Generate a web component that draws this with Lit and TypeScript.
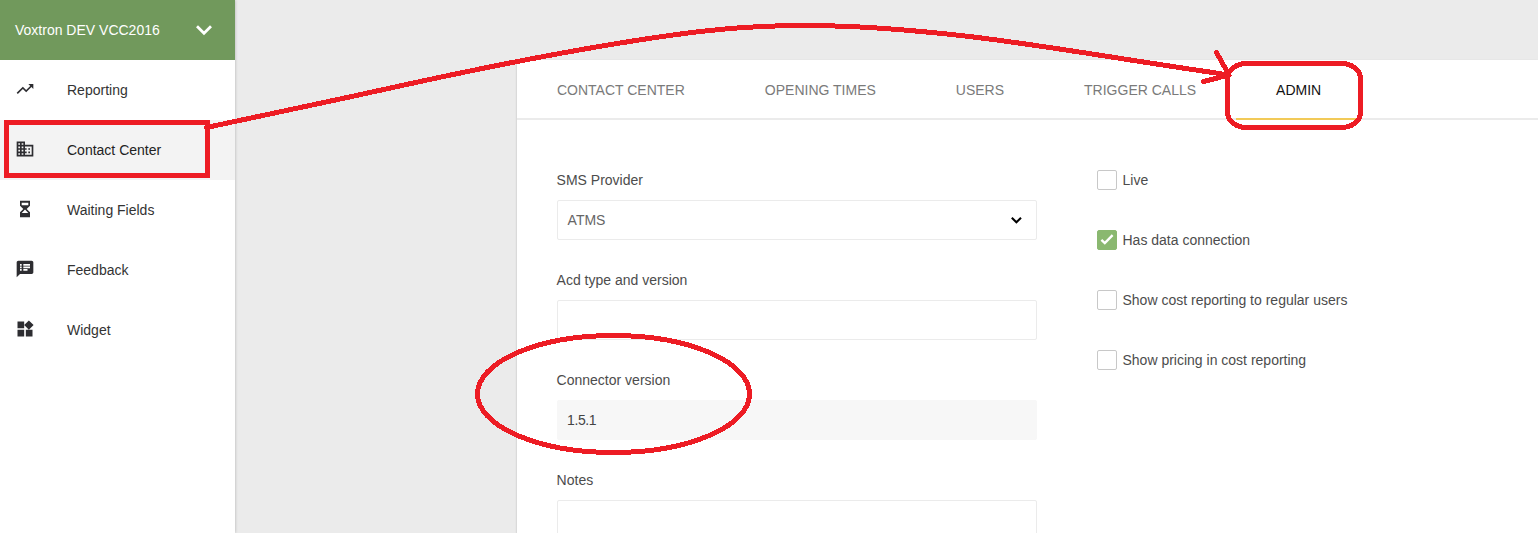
import { LitElement, html, css, svg } from "lit";
import { customElement, property } from "lit/decorators.js";
import { classMap } from "lit/directives/class-map.js";

const ICONS: Record<string, string> = {
  trending: "M16 6l2.29 2.29-4.88 4.88-4-4L2 16.59 3.41 18l6-6 4 4 6.3-6.29L22 12V6z",
  business:
    "M12 7V3H2v18h20V7H12zM6 19H4v-2h2v2zm0-4H4v-2h2v2zm0-4H4V9h2v2zm0-4H4V5h2v2zm4 12H8v-2h2v2zm0-4H8v-2h2v2zm0-4H8V9h2v2zm0-4H8V5h2v2zm10 12h-8v-2h2v-2h-2v-2h2v-2h-2V9h8v10zm-2-8h-2v2h2v-2zm0 4h-2v2h2v-2z",
  hourglass: "M6 2h12v6l-4 4 4 4v6H6v-6l4-4-4-4zM8 4.4v3h8v-3zM12 12.6l-4 4.2h8z",
  notes:
    "M20 2H4c-1.1 0-1.99.9-1.99 2L2 22l4-4h14c1.1 0 2-.9 2-2V4c0-1.1-.9-2-2-2zM8 14H6v-2h2v2zm0-3H6V9h2v2zm0-3H6V6h2v2zm7 6h-5v-2h5v2zm3-3h-8V9h8v2zm0-3h-8V6h8v2z",
  widgets: "M13 13v8h8v-8h-8zM3 21h8v-8H3v8zM3 3v8h8V3H3zm13.66-1.31L11 7.34 16.66 13l5.66-5.66-5.66-5.65z",
};

const NAV = [
  { label: "Reporting", icon: "trending" },
  { label: "Contact Center", icon: "business", active: true },
  { label: "Waiting Fields", icon: "hourglass" },
  { label: "Feedback", icon: "notes" },
  { label: "Widget", icon: "widgets" },
];

const TABS = ["Contact Center", "Opening Times", "Users", "Trigger Calls", "Admin"];

const OPTIONS = [
  { label: "Live", checked: false },
  { label: "Has data connection", checked: true },
  { label: "Show cost reporting to regular users", checked: false },
  { label: "Show pricing in cost reporting", checked: false },
];

@customElement("side-nav")
class SideNav extends LitElement {
  static styles = css`
    :host {
      display: block;
      width: 235px;
      flex: none;
      background: #fff;
      box-shadow: 0 0 3px rgba(0, 0, 0, 0.25);
      z-index: 1;
    }
    .account {
      display: flex;
      align-items: center;
      justify-content: space-between;
      box-sizing: border-box;
      height: 60px;
      padding: 0 22px 0 15px;
      background: #71995c;
      color: #fff;
    }
    .chevron {
      display: block;
      width: 18px;
      height: 12px;
    }
    .item {
      display: flex;
      align-items: center;
      gap: 32px;
      height: 60px;
      padding-left: 15px;
      color: #333;
    }
    .active {
      background: #f3f3f3;
      color: #222;
    }
    .icon {
      width: 20px;
      height: 20px;
      margin-bottom: 2px;
      fill: #2d2d31;
      fill-rule: evenodd;
    }
  `;
  render() {
    return html`
      <div class="account">
        <span>Voxtron DEV VCC2016</span>
        <svg class="chevron" viewBox="0 0 18 12">
          <path d="M2 2.2L9 9.2L16 2.2" fill="none" stroke="#fff" stroke-width="2.8" />
        </svg>
      </div>
      ${NAV.map(
        (n) => html`<div class=${classMap({ item: true, active: !!n.active })}>
          <svg class="icon" viewBox="0 0 24 24">${svg`<path d=${ICONS[n.icon]} />`}</svg>
          <span>${n.label}</span>
        </div>`
      )}
    `;
  }
}

@customElement("form-field")
class FormField extends LitElement {
  @property() label = "";
  @property() value = "";
  @property() kind = "text";
  static styles = css`
    :host {
      display: block;
      height: 100px;
    }
    .label {
      height: 40px;
      line-height: 40px;
      margin-left: -0.4px;
      color: #4c4c4c;
    }
    .box {
      display: flex;
      align-items: center;
      justify-content: space-between;
      box-sizing: border-box;
      height: 40px;
      padding: 0 14px 0 9.6px;
      border: 1px solid #ebebeb;
      border-radius: 2px;
      color: #666;
    }
    .readonly {
      border-color: #f7f7f7;
      background: #f7f7f7;
      padding-left: 9px;
      letter-spacing: -0.4px;
      color: #444;
    }
    .area {
      height: 120px;
    }
    .arrow {
      width: 12px;
      height: 8px;
    }
  `;
  render() {
    return html`
      <div class="label">${this.label}</div>
      <div class=${classMap({ box: true, readonly: this.kind === "readonly", area: this.kind === "area" })}>
        <span>${this.value}</span>
        ${this.kind === "select"
          ? html`<svg class="arrow" viewBox="0 0 12 8">
              <path d="M1.8 1.8L6.4 6.2L11 1.8" fill="none" stroke="#000" stroke-width="2.1" />
            </svg>`
          : null}
      </div>
    `;
  }
}

@customElement("check-option")
class CheckOption extends LitElement {
  @property() label = "";
  @property({ type: Boolean }) checked = false;
  static styles = css`
    :host {
      display: flex;
      align-items: center;
      gap: 5.5px;
      height: 20px;
      color: #4c4c4c;
    }
    .box {
      box-sizing: border-box;
      width: 20px;
      height: 20px;
      border: 1px solid #c8c8c8;
      border-radius: 2px;
      background: #fff;
    }
    .on {
      border-color: #8ab870;
      background: #8ab870;
    }
    .tick {
      display: block;
      width: 18px;
      height: 18px;
    }
  `;
  render() {
    return html`
      <span class=${classMap({ box: true, on: this.checked })}>
        ${this.checked
          ? html`<svg class="tick" viewBox="0 0 18 18">
              <path d="M3.4 8.8L6.8 12L14.6 4.2" fill="none" stroke="#fff" stroke-width="2.4" />
            </svg>`
          : null}
      </span>
      <span>${this.label}</span>
    `;
  }
}

@customElement("app-root")
class AppRoot extends LitElement {
  static styles = css`
    :host {
      display: flex;
      position: relative;
      width: 1538px;
      height: 533px;
      overflow: hidden;
      background: #ebebeb;
      font: 14px/20px "Liberation Sans", Arial, sans-serif;
    }
    .page {
      flex: 1;
      display: flex;
      padding: 60px 0 0 282px;
    }
    .card {
      flex: 1;
      background: #fff;
      box-shadow: 0 1px 2px rgba(0, 0, 0, 0.22);
    }
    .tabs {
      display: flex;
      box-sizing: border-box;
      height: 60px;
      border-bottom: 2px solid #ebebeb;
    }
    .tab {
      box-sizing: border-box;
      height: 60px;
      padding: 0 40px;
      line-height: 60px;
      text-transform: uppercase;
      color: #7a7a7a;
    }
    .current {
      border-bottom: 2px solid #f2ca58;
      color: #111;
    }
    .form {
      display: flex;
      gap: 60px;
      padding: 40px 40px 0;
    }
    .fields {
      width: 480px;
    }
    .options {
      display: flex;
      flex-direction: column;
      gap: 40px;
      padding-top: 10px;
    }
    .markup {
      position: absolute;
      inset: 0;
      z-index: 2;
      fill: none;
      stroke: #ed1c24;
      stroke-width: 5;
      pointer-events: none;
    }
  `;
  render() {
    return html`
      <side-nav></side-nav>
      <div class="page">
        <div class="card">
          <div class="tabs">
            ${TABS.map((t) => html`<div class=${classMap({ tab: true, current: t === "Admin" })}>${t}</div>`)}
          </div>
          <div class="form">
            <div class="fields">
              <form-field label="SMS Provider" value="ATMS" kind="select"></form-field>
              <form-field label="Acd type and version"></form-field>
              <form-field label="Connector version" value="1.5.1" kind="readonly"></form-field>
              <form-field label="Notes" kind="area"></form-field>
            </div>
            <div class="options">
              ${OPTIONS.map((o) => html`<check-option .label=${o.label} .checked=${o.checked}></check-option>`)}
            </div>
          </div>
        </div>
      </div>
      <svg class="markup" width="1538" height="533" viewBox="0 0 1538 533" shape-rendering="crispEdges">
        <rect x="6.5" y="122.5" width="201" height="53" />
        <path
          stroke-linecap="round"
          d="M206.5 127.5C276 112.8 347 97.7 417 82.2C511.3 61.8 605.7 43 700 31.5C735 27.3 770 25.5 805 25.5C860 25.5 916 30.3 971 36.7C1052 46.5 1132 61 1213 72.5L1228 75"
        />
        <path stroke-linecap="round" stroke-linejoin="round" d="M1216.5 52.5L1229 75L1203.5 81.5" />
        <rect x="1227.5" y="63.5" width="133" height="64" rx="19" ry="15" />
        <ellipse cx="613.5" cy="394" rx="136" ry="58.5" />
      </svg>
    `;
  }
}
